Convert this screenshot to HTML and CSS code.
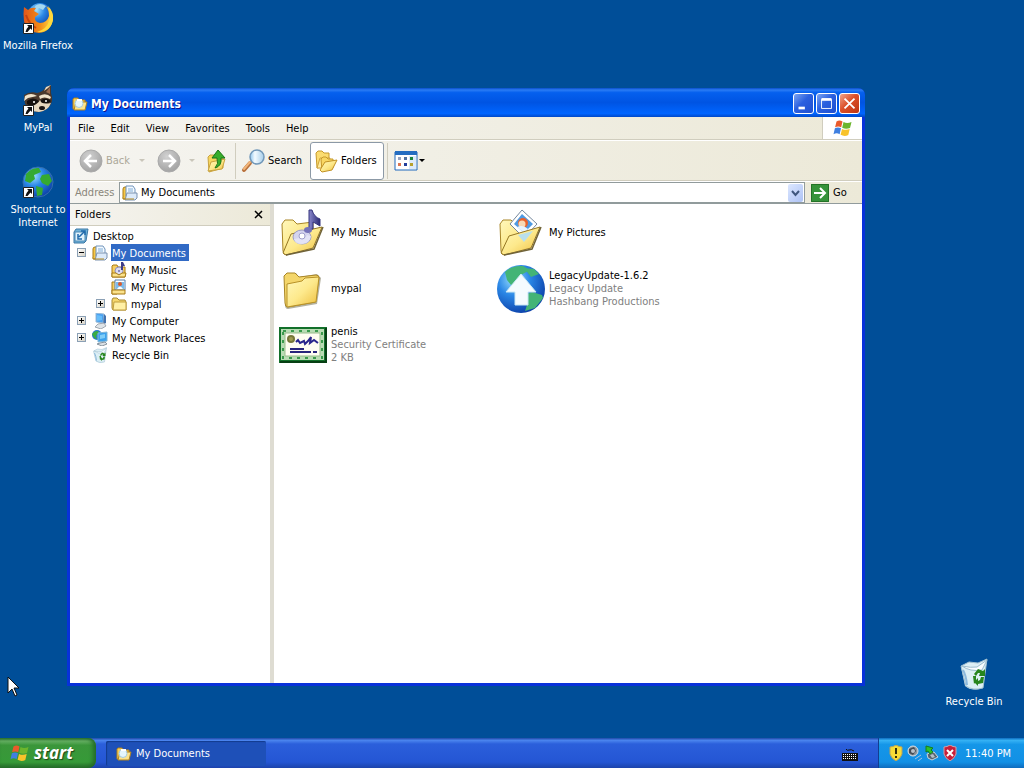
FILE: index.html
```html
<!DOCTYPE html>
<html lang="en">
  <head>
    <meta charset="UTF-8" />
    <meta name="viewport" content="width=device-width, initial-scale=1.0" />
    <title>My Documents</title>
    <link rel="stylesheet" href="styles.css">
  </head>
  <body>
    <!-- shared icons -->
    <svg class="sprite" aria-hidden="true">
      <defs>
        <linearGradient id="gold" x1="0" y1="0" x2="1" y2="1"><stop offset="0" stop-color="#fff8bc"/><stop offset=".5" stop-color="#fde98c"/><stop offset="1" stop-color="#edbd3c"/></linearGradient>
        <linearGradient id="note" x1="0" x2="1"><stop offset="0" stop-color="#8a88cc"/><stop offset="1" stop-color="#2b2a74"/></linearGradient>
        <linearGradient id="glass" x1="0" x2="1"><stop offset="0" stop-color="#8cc4ee"/><stop offset=".35" stop-color="#f4fbff"/><stop offset="1" stop-color="#a5cdea"/></linearGradient>
        <radialGradient id="globe" cx=".35" cy=".3" r=".75"><stop offset="0" stop-color="#9fe2ff"/><stop offset=".45" stop-color="#2a87e6"/><stop offset="1" stop-color="#0b3fa8"/></radialGradient>
        <radialGradient id="grey" cx=".4" cy=".3" r=".8"><stop offset="0" stop-color="#d2d2d2"/><stop offset="1" stop-color="#9c9c9c"/></radialGradient>
        <linearGradient id="fox" x1="0" x2="1"><stop offset="0" stop-color="#e0561a"/><stop offset=".55" stop-color="#f28a17"/><stop offset="1" stop-color="#ffdc48"/></linearGradient>
      </defs>
      <symbol id="i-flag" viewBox="0 0 20 20">
        <path d="M3.500 3.500Q6.500 1.500 9.500 3.500L8.200 9.300Q5.300 7.600 2.100 9.300z" fill="#ea5a2b"/>
        <path d="M10.500 4Q14 6 18.500 4L17 10Q13 11.600 9.200 9.800z" fill="#6cb52d"/>
        <path d="M1.900 10.300Q5 8.700 8 10.300L6.600 16.200Q3.700 14.500.5 16.200z" fill="#3f7fe0"/>
        <path d="M9 10.900Q12.800 12.600 16.700 11L15.300 17Q11.500 18.900 7.600 16.800z" fill="#f8c32a"/>
      </symbol>
      <symbol id="i-folder" viewBox="0 0 48 48">
        <path d="M6 12L9 8H17L20 12L38 9L42 13L38 39L9 44Q6 44 6 40z" fill="#777254" opacity=".55"/>
        <path d="M5 11L8 8H16L20 12L37 10Q40 10 40 13L36 37L9 42Q6 42 6 38z" fill="#f4d66b" stroke="#a88526"/>
        <path d="M8 19L23 16L26 13L40 12L37 37L8 42z" fill="url(#gold)" stroke="#b89228"/>
      </symbol>
      <symbol id="i-music" viewBox="0 0 48 48">
        <path d="M3 15L6 11H14L18 15L34 13V24L8 46Q4 46 4 42z" fill="url(#gold)" stroke="#a88526"/>
        <path d="M4 44L12 25L43 18L34 39L7 46z" fill="url(#gold)" stroke="#957622"/>
        <ellipse cx="23" cy="28" rx="9" ry="7" fill="#d4d4ee" stroke="#9a9ac4"/>
        <path d="M15 30Q16 36 24 35Q31 34 32 27L28 26Q26 31 20 29z" fill="#e4e4f6" opacity=".9"/>
        <circle cx="23" cy="27" r="3" fill="#fff" stroke="#a0a0cc"/>
        <path d="M30 1H33Q35 8 41 10V17L36 14L34 13V20H30z" fill="url(#note)" stroke="#35347c"/>
        <ellipse cx="29" cy="21" rx="4" ry="3" fill="#7472b9"/>
        <path d="M7 46L35 40L44 18" fill="none" stroke="#706338" stroke-width="1.500"/>
      </symbol>
      <symbol id="i-pictures" viewBox="0 0 48 48">
        <path d="M3 15L6 11H14L18 15L34 13V24L8 46Q4 46 4 42z" fill="url(#gold)" stroke="#a88526"/>
        <path d="M25 1L40 15L27 29L13 15z" fill="#fff" stroke="#74879c"/>
        <path d="M25 5L36 15L27 24L17 15z" fill="#4f9ae2"/>
        <circle cx="26" cy="14" r="5" fill="#e9612b"/><circle cx="25" cy="15" r="3.500" fill="#f9d8b4"/>
        <path d="M20 18Q26 15 31 20L27 24z" fill="#e9f4ff"/>
        <path d="M4 44L12 27L43 18L34 39L7 46z" fill="url(#gold)" stroke="#957622"/>
        <path d="M21 26L36 22L27 33z" fill="#b9dfeb"/>
        <path d="M7 46L35 40L44 18" fill="none" stroke="#706338" stroke-width="1.500"/>
      </symbol>
      <symbol id="i-search-folder" viewBox="0 0 16 16">
        <path d="M1 3L2 2H6L7 4H13V13H1z" fill="#f7cf59" stroke="#ad8120"/>
        <path d="M2 14L4 6H15L13 14z" fill="#fbe38c" stroke="#ad8120"/>
        <circle cx="7" cy="7.500" r="4" fill="#e4f6fd" stroke="#a9cbdc"/><path d="M5 3H10V5H5z" fill="#fff"/>
      </symbol>
      <symbol id="i-docs" viewBox="0 0 16 16">
        <path d="M1 4Q1 2 3 2H6V14H2Q0 14 1 12z" fill="#f6c645" stroke="#a77b16"/>
        <path d="M4 1H11L13 4V11H4z" fill="#f4faff" stroke="#6e93bc"/>
        <path d="M6 4H11M6 6H11" stroke="#80add8"/>
        <path d="M3 15L5 8H15V13L13 15z" fill="#dceafa" stroke="#7b91af"/>
        <path d="M1 14H12" stroke="#b28922"/>
      </symbol>
      <symbol id="i-desktop" viewBox="0 0 16 16">
        <path d="M3 1H15L13 13L11 15H1V4z" fill="#6fb2d8" stroke="#3c78a6"/>
        <path d="M2 4H12V13H2z" fill="#e0f3fc" stroke="#4d88b5"/><path d="M5 6V11H9M6 9L11 4M8 3H12V7" fill="none" stroke="#206bac" stroke-width="1.500"/>
      </symbol>
      <symbol id="i-computer" viewBox="0 0 16 16">
        <path d="M4 0L12 1L11 10L4 9z" fill="#4aa1f0" stroke="#98bbd8"/>
        <path d="M5 2L10 3V7L5 8z" fill="#65bdfa"/><path d="M12 1L14 3V10L11 12z" fill="#4372ad"/>
        <path d="M6 11L12 10L14 13L9 16L3 14z" fill="#dfe4e8" stroke="#a0a8b1"/>
      </symbol>
      <symbol id="i-network" viewBox="0 0 16 16">
        <circle cx="5" cy="5" r="5" fill="#2579d4"/><path d="M0 4Q4-1 7 2L4 6L5 9Q2 9 0 4" fill="#38ac43"/>
        <path d="M6 3L15 2V11L6 12z" fill="#3ba1ed" stroke="#81b6d7"/><path d="M8 5L13 4V8L8 9z" fill="#7fcdf8"/>
        <path d="M8 13L13 12L15 14L10 16L5 14z" fill="#dbe1e6" stroke="#87949f"/>
      </symbol>
      <symbol id="i-bin" viewBox="0 0 32 32">
        <path d="M3 9L25 11L24 30Q14 34 7 28z" fill="#cfe5ee"/>
        <path d="M3 8L11 4L20 5L29 1L25 30Q15 33 8 28z" fill="#dceff5" stroke="#a0bfd0"/>
        <path d="M4 8Q13 10 19 9L29 2L24 12Q12 14 4 8" fill="#f8fdff" stroke="#9dbdce"/>
        <path d="M5 12Q8 17 9 27" stroke="#8db9dc" stroke-width="2" fill="none"/>
        <path d="M16 16L20 11L25 13L27 11V18H21L22 15L20 15L18 18zM26 19L25 25L20 26V28L16 24L20 20V23L22 22L23 19zM15 18H18V23L16 26z" fill="#27851d"/>
      </symbol>
      <symbol id="i-shortcut" viewBox="0 0 11 11">
        <path d="M.5.5H10.500V10.500H.5z" fill="#fff" stroke="#222"/><path d="M4 2H9V7L7.500 5.500L4.500 9H2.500Q3 6 5.500 3.500z" fill="#111"/>
      </symbol>
      <symbol id="i-legacy" viewBox="0 0 48 48">
        <circle cx="24" cy="24" r="24" fill="url(#globe)"/>
        <path d="M8 7Q15 0 26 1L33 5L24 10L20 17L14 20L10 15zM27 3L37 4L42 9L34 12zM35 27L45 30L46 33L38 43L28 46L31 37L26 31z" fill="#43b476"/>
        <path d="M24 9L39 27H31V40H18V27H9z" fill="#f4fbff" stroke="#c9e7f4"/>
      </symbol>
    </svg>

    <main class="desktop">
      <div class="shortcuts">
        <a class="shortcut" href="#">
          <svg class="icon-32" viewBox="0 0 32 32" aria-hidden="true">
            <circle cx="18" cy="13" r="12" fill="url(#globe)"/>
            <path d="M13 4Q18 0 24 4L21 8L17 6L14 9z" fill="#a5d8f0"/>
            <path d="M2 5L6 8Q9 5 14 6L12 9L17 12L13 15Q12 20 18 21Q25 21 27 14Q27 8 24 4Q31 8 31 17Q29 30 17 31Q4 30 2 19Q1 12 2 5" fill="url(#fox)"/>
            <path d="M26 4Q32 10 31 18Q28 31 15 30Q25 27 27 19Q29 11 26 4" fill="#ffd83c"/>
            <path d="M4 13Q7 22 14 26" fill="none" stroke="#c5430f" stroke-width="2"/>
            <use href="#i-shortcut" x="1" y="21" width="11" height="11"/>
          </svg>
          <span>Mozilla Firefox</span>
        </a>
        <a class="shortcut" href="#">
          <svg class="icon-32" viewBox="0 0 32 32" aria-hidden="true">
            <path d="M2 11Q8 7 15 9Q21 8 24 3L29 1L29 9Q32 17 27 23Q21 29 14 28L3 20z" fill="#4a382c"/>
            <path d="M24 8L28 3V10z" fill="#9c6c50"/><path d="M22 7L24 3L29 1L26 4z" fill="#eadcc6"/>
            <path d="M3 12Q9 8 15 12L6 14L2 17zM17 12Q24 8 29 13L28 15Q22 12 18 15z" fill="#f1e4cc"/>
            <path d="M5 17Q11 12 17 17L14 21Q9 23 5 20zM19 16Q25 13 29 17L24 21L19 20z" fill="#15100e"/>
            <path d="M10 22Q16 20 18 16Q19 21 29 19Q26 27 17 28L10 27z" fill="#e6d7bf"/>
            <circle cx="12" cy="18" r="1" fill="#fff"/><circle cx="24" cy="17" r="1" fill="#fff"/><ellipse cx="20" cy="24" rx="3" ry="2" fill="#1b1412"/>
            <use href="#i-shortcut" x="1" y="21" width="11" height="11"/>
          </svg>
          <span>MyPal</span>
        </a>
        <a class="shortcut" href="#">
          <svg class="icon-32" viewBox="0 0 32 32" aria-hidden="true">
            <circle cx="16" cy="16" r="15" fill="url(#globe)" stroke="#356fac"/>
            <path d="M4 8Q10 1 17 2L19 6L12 9L13 13L8 17L3 15zM20 9L27 8L30 15L26 20L20 17L18 13zM14 20L21 22L20 29L15 30z" fill="#35aa31"/>
            <use href="#i-shortcut" x="1" y="21" width="11" height="11"/>
          </svg>
          <span>Shortcut to Internet</span>
        </a>
      </div>

      <a class="shortcut recycle" href="#">
        <svg class="icon-32" aria-hidden="true"><use href="#i-bin"/></svg>
        <span>Recycle Bin</span>
      </a>

      <section class="window">
        <header class="titlebar">
          <svg class="icon-16" aria-hidden="true"><use href="#i-search-folder"/></svg>
          <h1>My Documents</h1>
          <button class="win-btn" aria-label="Minimize"><svg viewBox="0 0 21 21"><path d="M5 14H12V17H5z" fill="#fff"/></svg></button>
          <button class="win-btn" aria-label="Maximize"><svg viewBox="0 0 21 21"><path d="M5 6H16V16H5z" fill="none" stroke="#fff"/><path d="M5 6H16" stroke="#fff" stroke-width="3"/></svg></button>
          <button class="win-btn close" aria-label="Close"><svg viewBox="0 0 21 21"><path d="M5 5L16 16M16 5L5 16" stroke="#fff" stroke-width="2"/></svg></button>
        </header>

        <nav class="menubar">
          <button>File</button><button>Edit</button><button>View</button><button>Favorites</button><button>Tools</button><button>Help</button>
          <div class="brand"><svg class="icon-20" aria-hidden="true"><use href="#i-flag"/></svg></div>
        </nav>

        <div class="toolbar">
          <button class="tool back" disabled>
            <svg class="icon-24" viewBox="0 0 24 24"><circle cx="12" cy="12" r="11" fill="url(#grey)" stroke="#aaa"/><path d="M18 12H7M12 6L6 12L12 18" fill="none" stroke="#fff" stroke-width="2.500"/></svg>
            <span>Back</span><i class="caret"></i>
          </button>
          <button class="tool forward" disabled aria-label="Forward">
            <svg class="icon-24" viewBox="0 0 24 24"><circle cx="12" cy="12" r="11" fill="url(#grey)" stroke="#aaa"/><path d="M6 12H17M12 6L18 12L12 18" fill="none" stroke="#fff" stroke-width="2.500"/></svg>
            <i class="caret"></i>
          </button>
          <button class="tool up" aria-label="Up">
            <svg class="icon-24" viewBox="0 0 24 24"><path d="M3 8L5 6H9L11 8H18V19L4 23z" fill="#f7d65e" stroke="#c9a340"/><path d="M3 22L6 13L20 10L17 20z" fill="url(#gold)" stroke="#c9a340"/><path d="M13 1L20 9H16Q17 17 10 19Q14 15 12 9H7z" fill="#38ad2b" stroke="#177516"/></svg>
          </button>
          <span class="divider"></span>
          <button class="tool search">
            <svg class="icon-24" viewBox="0 0 24 24"><path d="M3 21L9 14" stroke="#b9713c" stroke-width="4" stroke-linecap="round"/><path d="M3 20L9 13" stroke="#f2b67a" stroke-width="2" stroke-linecap="round"/><circle cx="16" cy="8" r="7" fill="url(#glass)" stroke="#7298b9" stroke-width="1.500"/></svg>
            <span>Search</span>
          </button>
          <button class="tool pressed">
            <svg class="icon-24" viewBox="0 0 24 24"><path d="M2 4L4 2H8L10 4H15V17L3 19z" fill="#fbdc70" stroke="#c79a2c"/><path d="M3 19L6 9H16L14 19z" fill="#ffeb9d" stroke="#cfa33a"/><path d="M7 10L9 8H12L14 10H19V19L8 22z" fill="#f9d763" stroke="#c79a2c"/><path d="M6 21L11 13L23 11L18 21L8 23z" fill="url(#gold)" stroke="#c29225"/></svg>
            <span>Folders</span>
          </button>
          <span class="divider"></span>
          <button class="tool views" aria-label="Views">
            <svg class="icon-24" viewBox="0 0 24 24"><path d="M1 3H23V21H1z" fill="#fff" stroke="#1e69bd"/><path d="M1 2H23V6H1z" fill="#246dc1"/><path d="M15 7H22V20H15z" fill="#dceafa"/><path d="M4 8H7V11H4z" fill="#98a3bf"/><path d="M10 8H13V11H10z" fill="#5272a0"/><path d="M16 8H19V11H16z" fill="#1c843e"/><path d="M4 14H7V17H4z" fill="#dc7550"/><path d="M10 14H13V17H10z" fill="#233e9b"/><path d="M16 14H19V17H16z" fill="#b6a02d"/></svg>
            <i class="caret"></i>
          </button>
        </div>

        <form class="address">
          <label for="address">Address</label>
          <div class="combo">
            <svg class="icon-16" aria-hidden="true"><use href="#i-docs"/></svg>
            <input id="address" type="text" value="My Documents">
            <button type="button" aria-label="Show addresses"><svg viewBox="0 0 15 18"><path d="M4 7L7.500 11L11 7" fill="none" stroke="#40577f" stroke-width="2"/></svg></button>
          </div>
          <button class="go" type="button">
            <svg class="icon-18" viewBox="0 0 18 18"><path d="M0 0H18V18H0z" fill="#36933a"/><path d="M.5.5H17.500V17.500H.5z" fill="none" stroke="#237227"/><path d="M3 9H14M9 4L14 9L9 14" fill="none" stroke="#fff" stroke-width="2"/></svg>
            <span>Go</span>
          </button>
        </form>

        <div class="panes">
          <aside class="tree">
            <header><h2>Folders</h2><button aria-label="Close folders"><svg viewBox="0 0 9 9"><path d="M1 1L8 8M8 1L1 8" stroke="#000" stroke-width="1.500"/></svg></button></header>
            <ul>
              <li>
                <div class="node root"><svg class="icon-16"><use href="#i-desktop"/></svg><a href="#">Desktop</a></div>
                <ul>
                  <li>
                    <div class="node"><button class="toggle open" aria-label="Collapse My Documents"></button><svg class="icon-16"><use href="#i-docs"/></svg><a class="selected" href="#">My Documents</a></div>
                    <ul class="inner">
                      <li class="node"><span class="slot"></span><svg class="icon-16" viewBox="0 0 16 16"><path d="M1 4L2 3H6L7 5H14V15H1z" fill="#f6cf61" stroke="#a77b16"/><circle cx="8" cy="9" r="4" fill="#dcdcf2" stroke="#8f8fbb"/><circle cx="8" cy="9" r="1" fill="#6f6fa8"/><path d="M1 11H5L8 13L11 11H15L14 15H1z" fill="#fbe28b" stroke="#a77b16"/><path d="M10 0H12L14 4H12V8H10z" fill="#3d3c88"/></svg><a href="#">My Music</a></li>
                      <li class="node"><span class="slot"></span><svg class="icon-16" viewBox="0 0 16 16"><path d="M1 3H6V15H1z" fill="#f6cf61" stroke="#a77b16"/><path d="M4 1H14V11H4z" fill="#fff" stroke="#517daf"/><path d="M5 3H13V10H5z" fill="#7bbceb"/><circle cx="9" cy="5" r="2" fill="#d85a2d"/><path d="M6 10Q9 5 12 10z" fill="#fff"/><path d="M1 11H14V15H1z" fill="#fbe28b" stroke="#a77b16"/></svg><a href="#">My Pictures</a></li>
                      <li class="node"><button class="toggle" aria-label="Expand mypal"></button><svg class="icon-16" viewBox="0 0 16 16"><path d="M1 4L2 2H6L8 4H14L15 6V14H2L1 12z" fill="#f5d76d" stroke="#a88a35"/><path d="M3 6H15V14H2z" fill="#fff0a5" stroke="#c09e3f"/></svg><a href="#">mypal</a></li>
                    </ul>
                  </li>
                  <li class="node"><button class="toggle" aria-label="Expand My Computer"></button><svg class="icon-16"><use href="#i-computer"/></svg><a href="#">My Computer</a></li>
                  <li class="node"><button class="toggle" aria-label="Expand My Network Places"></button><svg class="icon-16"><use href="#i-network"/></svg><a href="#">My Network Places</a></li>
                  <li class="node"><span class="slot"></span><svg class="icon-16"><use href="#i-bin"/></svg><a href="#">Recycle Bin</a></li>
                </ul>
              </li>
            </ul>
          </aside>

          <div class="files">
            <a class="file" href="#"><svg class="icon-48"><use href="#i-music"/></svg><span>My Music</span></a>
            <a class="file" href="#"><svg class="icon-48"><use href="#i-pictures"/></svg><span>My Pictures</span></a>
            <a class="file" href="#"><svg class="icon-48"><use href="#i-folder"/></svg><span>mypal</span></a>
            <a class="file" href="#"><svg class="icon-48"><use href="#i-legacy"/></svg><span>LegacyUpdate-1.6.2<small>Legacy Update</small><small>Hashbang Productions</small></span></a>
            <a class="file" href="#">
              <svg class="icon-48" viewBox="0 0 48 48">
                <path d="M0 6H48V42H0z" fill="#12702a"/><path d="M1 41H47V7" fill="none" stroke="#063f13" stroke-width="2"/>
                <path d="M2 8H45V39H2z" fill="#b9dcb4"/>
                <path d="M4 10H43V37H4z" fill="none" stroke="#3b9a4d" stroke-width="2" stroke-dasharray="3 5"/>
                <path d="M6 12H41V35H6z" fill="#fffdf2" stroke="#98bd8c"/>
                <circle cx="12" cy="18" r="4" fill="#77783a"/><circle cx="12" cy="18" r="2" fill="#a09b50"/>
                <path d="M17 21L19 19L21 22L25 20L26 23L29 20L32 16L31 22L35 19L39 22" fill="none" stroke="#29258c" stroke-width="2"/>
                <path d="M11 28H25M11 31H32M34 31H38" stroke="#28257c" stroke-width="2"/>
              </svg>
              <span>penis<small>Security Certificate</small><small>2 KB</small></span>
            </a>
          </div>
        </div>
      </section>

      <svg class="cursor" viewBox="0 0 13 21" aria-hidden="true"><path d="M1 1V17L5 13L8 20L10 19L7 12H12z" fill="#fff" stroke="#111"/></svg>
    </main>

    <footer class="taskbar">
      <button class="start"><svg class="icon-20" aria-hidden="true"><use href="#i-flag"/></svg>start</button>
      <button class="task"><svg class="icon-16" aria-hidden="true"><use href="#i-search-folder"/></svg>My Documents</button>
      <button class="keyboard" aria-label="Keyboard"><svg viewBox="0 0 16 14"><path d="M4 1Q5 3 7 2T12 3" fill="none" stroke="#111"/><path d="M0 5H16V13H0z" fill="#111"/><path d="M1 7H15M1 9H15M1 11H15" stroke="#fff" stroke-dasharray="1 1" transform="translate(0 -.5)"/></svg></button>
      <div class="tray">
        <svg class="icon-16" viewBox="0 0 16 16"><path d="M8 0Q11 2 14 2V9Q13 13 8 16Q3 13 2 9V2Q5 2 8 0" fill="#f8dc36" stroke="#b8a35a"/><path d="M8 3V9M8 11V13" stroke="#35300c" stroke-width="2"/></svg>
        <svg class="icon-16" viewBox="0 0 16 16"><circle cx="7" cy="6" r="5" fill="#8b949c" stroke="#d7dee5"/><path d="M3 4L8 2L10 6L7 10L3 8z" fill="#454c54"/><circle cx="7" cy="6" r="2" fill="#b9c1c8"/><path d="M9 14L15 10M12 16L16 13" stroke="#a7c4de"/></svg>
        <svg class="icon-16" viewBox="0 0 16 16"><path d="M3 9L10 7L14 12L8 15L4 13z" fill="#57646e" stroke="#cbd5db"/><path d="M6 10L9 9L11 12L8 13z" fill="#b3bec5"/><path d="M2 1L9 3L7 5L9 7L6 9L4 6L2 7z" fill="#2cc129" stroke="#167c1b"/></svg>
        <svg class="icon-16" viewBox="0 0 16 16"><path d="M8 0Q11 2 14 2V9Q13 13 8 16Q3 13 2 9V2Q5 2 8 0" fill="#c81e3a" stroke="#d3a1a9"/><path d="M5 5L11 11M11 5L5 11" stroke="#fff" stroke-width="2"/></svg>
        <time>11:40 PM</time>
      </div>
    </footer>
  </body>
</html>
```

FILE: styles.css
```css
:root {
  --desktop: #004e98;
  --face: #ece9d8;
  --face-light: #f5f4f0;
  --line: #d0cdbe;
  --font: "DejaVu Sans Condensed", "Noto Sans", sans-serif;
}
* { box-sizing: border-box; }
body {
  margin: 0;
  height: 100vh;
  display: flex;
  flex-direction: column;
  overflow: hidden;
  background: var(--desktop);
  color: #000;
  font: 11px/13px var(--font);
}
button, input { font: inherit; color: inherit; }
button { margin: 0; padding: 0; border: 0; background: none; }
a { color: inherit; text-decoration: none; }
ul { list-style: none; margin: 0; padding: 0; }
h1, h2 { margin: 0; font: inherit; }
svg { display: block; flex: none; }
.sprite { position: absolute; width: 0; height: 0; }
.icon-16 { width: 16px; height: 16px; }
.icon-18 { width: 18px; height: 18px; }
.icon-20 { width: 20px; height: 20px; }
.icon-24 { width: 24px; height: 24px; }
.icon-32 { width: 32px; height: 32px; }
.icon-48 { width: 48px; height: 48px; }

/* desktop */
.desktop { position: relative; flex: 1; }
.shortcut {
  width: 76px;
  height: 82px;
  padding-top: 2px;
  display: flex;
  flex-direction: column;
  align-items: center;
  gap: 5px;
  color: #fff;
  text-align: center;
}
.recycle { position: absolute; right: 12px; bottom: 0; }
.cursor { position: absolute; left: 7px; bottom: 41px; width: 13px; height: 21px; }

/* window */
.window {
  position: absolute;
  left: 67px;
  right: 159px;
  top: 88px;
  bottom: 52px;
  display: flex;
  flex-direction: column;
  padding: 0 3px 3px;
  border-radius: 7px 7px 0 0;
  background: #0831d9;
}
.titlebar {
  height: 29px;
  margin: 0 -3px;
  padding: 2px 5px 0;
  display: flex;
  align-items: center;
  gap: 2px;
  border-radius: 7px 7px 0 0;
  background: linear-gradient(#0a4ecb, #2a7cf5 7%, #0560ee 16%, #0054e3 50%, #0065ff 88%, #0048c8);
  color: #fff;
}
.titlebar h1 {
  flex: 1;
  padding-left: 1px;
  font-size: 12px;
  line-height: 14px;
  font-weight: 700;
  text-shadow: 1px 1px #0f1089;
}
.win-btn {
  width: 21px;
  height: 21px;
  border: 1px solid #fff;
  border-radius: 3px;
  background: linear-gradient(135deg, #7ba4f2, #2b60df 45%, #1f4fd0);
}
.win-btn.close { background: linear-gradient(135deg, #f0a58c, #dc5029 45%, #bd3514); }
.win-btn svg { width: 19px; height: 19px; }
.menubar {
  height: 23px;
  display: flex;
  align-items: center;
  border-bottom: 1px solid var(--line);
  background: linear-gradient(90deg, var(--face-light), var(--face));
}
.menubar button { height: 22px; padding: 0 8px; }
.brand {
  width: 40px;
  height: 22px;
  margin-left: auto;
  display: flex;
  justify-content: center;
  align-items: center;
  border-left: 1px solid var(--line);
  background: #fff;
}
.toolbar {
  height: 41px;
  display: flex;
  align-items: center;
  padding: 0 9px;
  border-top: 1px solid #fff;
  border-bottom: 1px solid var(--line);
  background: linear-gradient(90deg, var(--face-light), var(--face));
}
.tool { display: flex; align-items: center; gap: 3px; }
.tool:disabled { color: #aca899; }
.caret { border: 3px solid transparent; border-top-color: currentColor; border-bottom: 0; }
.tool:disabled .caret { color: #c9c6ba; }
.back { width: 78px; }
.back .caret { margin-left: 6px; }
.forward { width: 48px; gap: 8px; }
.divider { width: 1px; height: 36px; margin: 0 2px 0 6px; background: var(--line); }
.search { width: 72px; padding-left: 3px; }
.pressed {
  height: 38px;
  padding: 0 6px 0 3px;
  border: 1px solid #8c99a6;
  border-radius: 3px;
  background: #fff;
}
.pressed + .divider { margin-left: 3px; }
.views { padding-left: 4px; }
.views .caret { margin-left: -2px; }
.address {
  height: 22px;
  display: flex;
  align-items: center;
  padding-left: 5px;
  border-top: 1px solid #fff;
  background: linear-gradient(90deg, var(--face-light), var(--face));
}
.address label { width: 44px; color: #8a867a; }
.combo {
  flex: 1;
  min-width: 0;
  height: 21px;
  display: flex;
  align-items: center;
  padding: 0 1px 0 2px;
  border: 1px solid #919b9c;
  background: #fff;
}
.combo input { flex: 1; min-width: 0; height: 17px; padding: 0 3px; border: 0; outline: 0; background: none; }
.combo button { width: 15px; height: 18px; border-radius: 2px; background: linear-gradient(135deg, #dce7ff, #adc2f5); }
.go { width: 57px; display: flex; align-items: center; gap: 4px; padding-left: 6px; }

/* panes */
.panes { flex: 1; min-height: 0; display: flex; border-top: 1px solid #919b9c; background: #fff; }
.tree { width: 204px; border-right: 4px solid #dedcd2; }
.tree header {
  height: 22px;
  display: flex;
  justify-content: space-between;
  align-items: center;
  padding: 0 7px 0 5px;
  border-bottom: 1px solid var(--line);
  background: linear-gradient(90deg, var(--face-light), var(--face));
}
.tree header button { width: 9px; height: 15px; }
.tree header svg { width: 9px; height: 9px; }
.tree > ul { padding-top: 1px; }
.node { height: 17px; display: flex; align-items: center; gap: 3px; }
.node.root { padding-left: 3px; }
.node a { height: 17px; padding: 3px 1px 1px; white-space: nowrap; }
.node .selected { padding-right: 3px; background: #316ac5; color: #fff; }
.inner { padding-left: 19px; }
.toggle, .slot { flex: none; width: 9px; height: 9px; margin: 0 3px 0 7px; }
.toggle {
  border: 1px solid #8ba0b5;
  background:
    linear-gradient(#000, #000) center / 5px 1px no-repeat,
    linear-gradient(#000, #000) center / 1px 5px no-repeat,
    linear-gradient(135deg, #fff, #d5d1c5);
}
.toggle.open {
  background:
    linear-gradient(#000, #000) center / 5px 1px no-repeat,
    linear-gradient(135deg, #fff, #d5d1c5);
}
.files {
  flex: 1;
  min-width: 0;
  display: grid;
  grid-template-columns: repeat(auto-fill, 218px);
  grid-auto-rows: 56px;
  align-content: start;
  padding: 1px 5px;
}
.file { display: flex; align-items: center; gap: 4px; }
.file span { padding-bottom: 2px; }
.file small { display: block; font-size: 11px; color: #808080; }

/* taskbar */
.taskbar {
  flex: none;
  height: 30px;
  display: flex;
  align-items: stretch;
  background: linear-gradient(#1f49a8, #4a84ee 8%, #2b5fdb 20%, #2456d4 80%, #1c43ab);
  color: #fff;
}
.start {
  width: 96px;
  display: flex;
  align-items: center;
  gap: 4px;
  padding-left: 10px;
  border-radius: 0 8px 8px 0;
  background: linear-gradient(#2c7330, #66b063 10%, #3a963a 24%, #369a38 80%, #256c29);
  box-shadow: inset -3px 0 4px #236b28;
  font: italic 700 17px/20px "Open Sans", "Noto Sans", sans-serif;
  text-shadow: 1px 1px 1px #1c4519;
}
.task {
  width: 160px;
  margin: 3px 0 2px 10px;
  display: flex;
  align-items: center;
  gap: 4px;
  padding-left: 10px;
  border-radius: 2px;
  background: #1e50b8;
  box-shadow: inset 1px 1px 1px #123b8e;
}
.keyboard { width: 16px; margin: 4px 20px 0 auto; }
.keyboard svg { width: 16px; height: 14px; }
.tray {
  width: 146px;
  display: flex;
  align-items: center;
  gap: 2px;
  padding-left: 9px;
  border-left: 1px solid #123e91;
  background: linear-gradient(#0d6cc0, #35b1f4 8%, #1496e8 22%, #1290e5 80%, #0f6bbd);
}
.tray time { padding-left: 5px; white-space: nowrap; }
```
